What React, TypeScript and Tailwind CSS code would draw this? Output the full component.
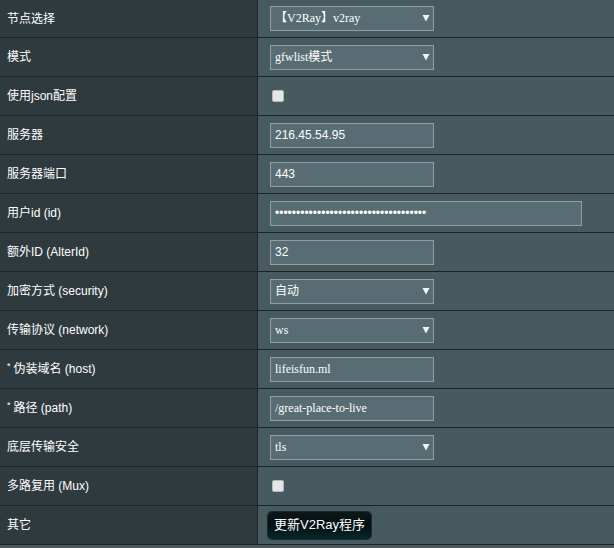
import React from 'react';

type Field =
  | { kind: 'select'; value: string }
  | { kind: 'input'; value: string; serif?: boolean }
  | { kind: 'password'; value: string }
  | { kind: 'checkbox' }
  | { kind: 'button'; label: string };

interface Row {
  label: string;
  star?: boolean;
  field: Field;
}

const rows: Row[] = [
  { label: '节点选择', field: { kind: 'select', value: '【V2Ray】v2ray' } },
  { label: '模式', field: { kind: 'select', value: 'gfwlist模式' } },
  { label: '使用json配置', field: { kind: 'checkbox' } },
  { label: '服务器', field: { kind: 'input', value: '216.45.54.95' } },
  { label: '服务器端口', field: { kind: 'input', value: '443' } },
  { label: '用户id (id)', field: { kind: 'password', value: 'a'.repeat(36) } },
  { label: '额外ID (AlterId)', field: { kind: 'input', value: '32' } },
  { label: '加密方式 (security)', field: { kind: 'select', value: '自动' } },
  { label: '传输协议 (network)', field: { kind: 'select', value: 'ws' } },
  { label: '伪装域名 (host)', star: true, field: { kind: 'input', value: 'lifeisfun.ml', serif: true } },
  { label: '路径 (path)', star: true, field: { kind: 'input', value: '/great-place-to-live', serif: true } },
  { label: '底层传输安全', field: { kind: 'select', value: 'tls' } },
  { label: '多路复用 (Mux)', field: { kind: 'checkbox' } },
  { label: '其它', field: { kind: 'button', label: '更新V2Ray程序' } },
];

const sans = "font-['Liberation_Sans','Noto_Sans_CJK_SC',sans-serif]";
const serif = "font-['Liberation_Serif','Noto_Sans_CJK_SC',serif]";

// small white drop-down triangle drawn over the fake select
const Arrow: React.FC = () => (
  <svg width="8" height="7" viewBox="0 0 8 7" className="absolute right-[4px] top-[9px] pointer-events-none">
    <path d="M0.5 0 H7.5 L4 6.5 Z" fill="#f2f4f4" />
  </svg>
);

const FieldCell: React.FC<{ field: Field }> = ({ field }) => {
  switch (field.kind) {
    case 'select':
      return (
        <div className="relative w-[164px] h-[25px]">
          <div className={`w-full h-full border border-[#929ea1] bg-[#576d73] text-white text-[12px] leading-[23px] pl-[4px] ${serif}`}>
            {field.value}
          </div>
          <Arrow />
        </div>
      );
    case 'input':
      return (
        <input
          readOnly
          value={field.value}
          className={`w-[164px] h-[25px] border border-[#929ea1] bg-[#576d73] text-white px-[4px] outline-none text-[12px] ${
            field.serif ? serif : sans
          }`}
        />
      );
    case 'password':
      return (
        <input
          readOnly
          type="password"
          value={field.value}
          className={`w-[312px] h-[25px] border border-[#929ea1] bg-[#576d73] text-white px-[4px] outline-none text-[12px] ${sans}`}
        />
      );
    case 'checkbox':
      return (
        <span className="ml-[2px] block w-[12px] h-[12px] rounded-[2px] border border-[#b4b8b9] bg-[#e4e5e5]" />
      );
    case 'button':
      return (
        <button
          className={`-ml-[2px] h-[27px] px-[6px] rounded-[4px] bg-gradient-to-b from-[#0c1719] via-[#031012] to-[#06282b] text-white text-[13px] shadow-[0_0_0_1px_#1b2a2d] ${sans}`}
        >
          {field.label}
        </button>
      );
  }
};

export default function App() {
  return (
    <div className={`min-h-screen bg-[#4d595d] ${sans}`}>
      {rows.map((row, i) => (
        <div
          key={row.label}
          className={`flex border-b border-[#222] ${i === 0 ? 'h-[38px]' : 'h-[39px]'}`}
        >
          <div className="w-[258px] shrink-0 border-r border-[#222] bg-[#2f3a3f] flex items-center pl-[7px] text-white text-[12px]">
            {row.star && <span className="text-[9px] mr-[3px] -mt-[5px]">*</span>}
            {row.label}
          </div>
          <div className="flex-1 bg-[#475a5f] flex items-center pl-[12px]">
            <FieldCell field={row.field} />
          </div>
        </div>
      ))}
    </div>
  );
}
